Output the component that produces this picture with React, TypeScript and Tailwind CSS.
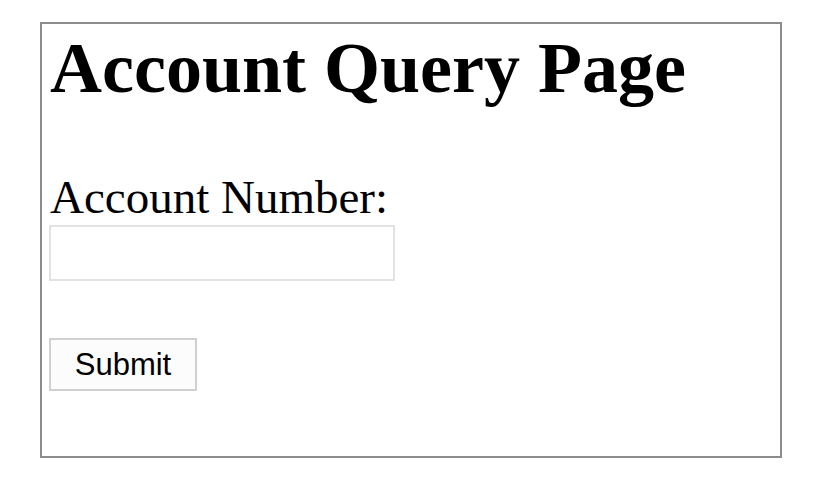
export default function App() {
  return (
    <div className="h-[478px] w-[820px] bg-white pl-[40px] pt-[22px]">
      <div className="flex h-[436px] w-[742px] flex-col items-start border-2 border-[#8c8c8c] pl-[8px]">
        <h1 className="mt-[8px] font-['Liberation_Serif',serif] text-[72px] font-bold leading-[72px] text-black">
          Account Query Page
        </h1>
        <form className="flex flex-col items-start" onSubmit={(e) => e.preventDefault()}>
          <label
            htmlFor="account"
            className="mt-[70px] font-['Liberation_Serif',serif] text-[47px] leading-[47px] text-black"
          >
            Account Number:
          </label>
          <input
            id="account"
            type="text"
            className="-ml-[1px] mt-[4px] h-[56px] w-[346px] border-2 border-[#e2e2e2] bg-white outline-none"
          />
          <button
            type="submit"
            className="-ml-[1px] mt-[57px] h-[53px] w-[148px] border-2 border-[#d0d0d0] bg-[#fcfcfc] font-['Liberation_Sans',sans-serif] text-[31px] leading-none text-black"
          >
            Submit
          </button>
        </form>
      </div>
    </div>
  );
}
